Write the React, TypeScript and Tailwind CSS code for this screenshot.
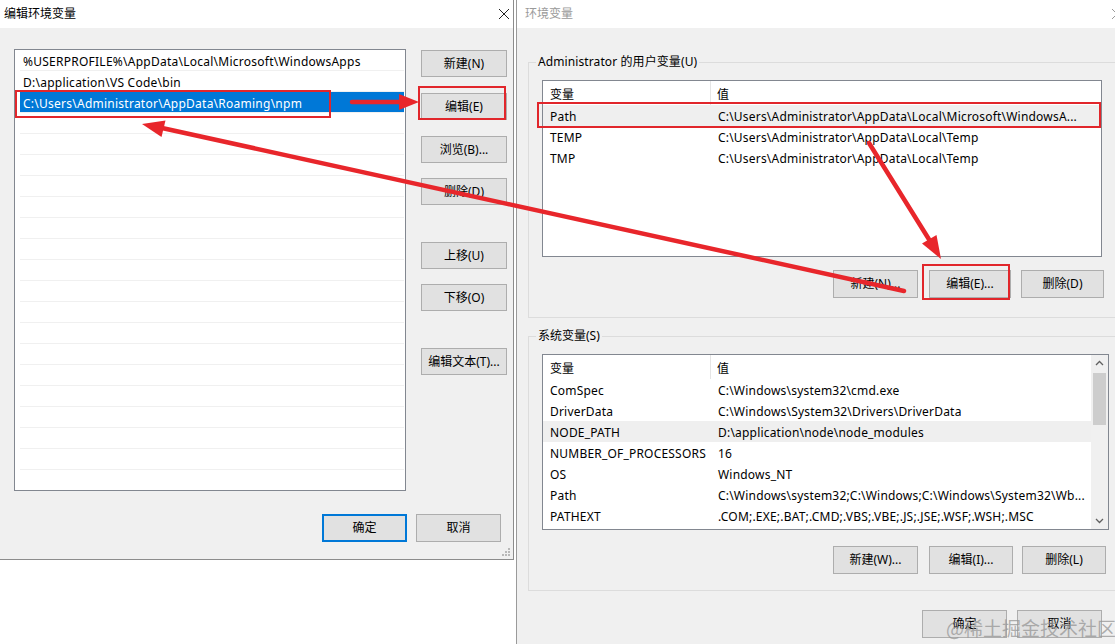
import React from "react";

const FONT = "font-['Noto_Sans','Noto_Sans_CJK_SC',sans-serif]";

function Btn({ children, cls }: { children: React.ReactNode; cls: string }) {
  return (
    <div className={"flex items-center justify-center border border-[#adadad] bg-[#e1e1e1] shrink-0 " + cls}>
      {children}
    </div>
  );
}

function CloseX({ color }: { color: string }) {
  return (
    <svg width="12" height="12" viewBox="0 0 12 12" className="shrink-0">
      <path d="M1 1 L11 11 M11 1 L1 11" stroke={color} strokeWidth="1" fill="none" />
    </svg>
  );
}

const leftRows = [
  "%USERPROFILE%\\AppData\\Local\\Microsoft\\WindowsApps",
  "D:\\application\\VS Code\\bin",
  "C:\\Users\\Administrator\\AppData\\Roaming\\npm",
  ...Array.from({ length: 18 }, () => ""),
];

const userVars: [string, string][] = [
  ["Path", "C:\\Users\\Administrator\\AppData\\Local\\Microsoft\\WindowsA..."],
  ["TEMP", "C:\\Users\\Administrator\\AppData\\Local\\Temp"],
  ["TMP", "C:\\Users\\Administrator\\AppData\\Local\\Temp"],
];

const sysVars: [string, string][] = [
  ["ComSpec", "C:\\Windows\\system32\\cmd.exe"],
  ["DriverData", "C:\\Windows\\System32\\Drivers\\DriverData"],
  ["NODE_PATH", "D:\\application\\node\\node_modules"],
  ["NUMBER_OF_PROCESSORS", "16"],
  ["OS", "Windows_NT"],
  ["Path", "C:\\Windows\\system32;C:\\Windows;C:\\Windows\\System32\\Wb..."],
  ["PATHEXT", ".COM;.EXE;.BAT;.CMD;.VBS;.VBE;.JS;.JSE;.WSF;.WSH;.MSC"],
];

function TableHeader() {
  return (
    <div className="h-[24px] flex items-center bg-white shrink-0">
      <div className="w-[168px] h-full flex items-center pl-[7px] pt-[4px] border-r border-[#e5e5e5] shrink-0">变量</div>
      <div className="pl-[6px] pt-[4px]">值</div>
    </div>
  );
}

function TableRow({ name, value, hi }: { name: string; value: string; hi: boolean }) {
  return (
    <div
      className={
        "h-[21px] flex items-center pt-[3px] shrink-0 whitespace-nowrap tracking-[0.2px] " + (hi ? "bg-[#efefef]" : "")
      }
    >
      <div className="w-[168px] pl-[7px] shrink-0">{name}</div>
      <div className="pl-[7px]">{value}</div>
    </div>
  );
}

export default function App() {
  return (
    <div className={"relative w-[1115px] h-[644px] overflow-hidden bg-white text-[12px] leading-none text-black flex " + FONT}>
      {/* Left dialog column */}
      <div className="w-[516px] shrink-0 flex flex-col bg-white">
        <div className="w-[514px] h-[560px] flex flex-col border-r border-b border-[#8c8c8c]">
          <div className="h-[28px] bg-white flex items-center justify-between pl-[4px] pr-[3px] shrink-0">
            <span>编辑环境变量</span>
            <CloseX color="#222" />
          </div>
          <div className="relative flex-1 bg-[#f0f0f0] flex flex-col pt-[21px] pl-[14px]">
            <div className="flex">
              <div className="w-[392px] h-[442px] border border-[#828790] bg-white overflow-hidden flex flex-col">
                {leftRows.map((r, i) => (
                  <div
                    key={i}
                    className={
                      "ml-[5px] mr-px h-[21px] shrink-0 flex items-center pl-[3px] pt-[3px] border-b border-[#f0f0f0] whitespace-nowrap tracking-[0.25px] " +
                      (i === 2 ? "bg-[#0078d7] text-white" : "")
                    }
                  >
                    {r}
                  </div>
                ))}
              </div>
              <div className="flex flex-col ml-[15px]">
                <Btn cls="w-[86px] h-[27px] mt-px">新建(N)</Btn>
                <Btn cls="w-[86px] h-[27px] mt-[16px]">编辑(E)</Btn>
                <Btn cls="w-[86px] h-[27px] mt-[16px]">浏览(B)...</Btn>
                <Btn cls="w-[86px] h-[27px] mt-[15px]">删除(D)</Btn>
                <Btn cls="w-[86px] h-[27px] mt-[37px]">上移(U)</Btn>
                <Btn cls="w-[86px] h-[27px] mt-[15px]">下移(O)</Btn>
                <Btn cls="w-[86px] h-[27px] mt-[37px]">编辑文本(T)...</Btn>
              </div>
            </div>
            <div className="flex justify-end gap-[9px] mt-[23px] pr-[12px]">
              <div className="w-[85px] h-[28px] flex items-center justify-center border-2 border-[#0078d7] bg-[#e1e1e1]">确定</div>
              <Btn cls="w-[85px] h-[28px]">取消</Btn>
            </div>
            <svg width="10" height="10" viewBox="0 0 10 10" className="absolute right-[2px] bottom-[2px]">
              <rect x="7" y="1" width="2" height="2" fill="#b8b8b8" />
              <rect x="4" y="4" width="2" height="2" fill="#b8b8b8" />
              <rect x="7" y="4" width="2" height="2" fill="#b8b8b8" />
              <rect x="1" y="7" width="2" height="2" fill="#b8b8b8" />
              <rect x="4" y="7" width="2" height="2" fill="#b8b8b8" />
              <rect x="7" y="7" width="2" height="2" fill="#b8b8b8" />
            </svg>
          </div>
        </div>
        <div className="flex-1 bg-white" />
      </div>

      {/* Right dialog */}
      <div className="flex-1 min-w-0 flex flex-col border-l border-[#9a9a9a]">
        <div className="h-[28px] bg-white flex items-center justify-between pl-[8px] shrink-0">
          <span className="text-[#9a9a9a]">环境变量</span>
          <div className="mr-[-8px]">
            <CloseX color="#999" />
          </div>
        </div>
        <div className="flex-1 bg-[#f0f0f0] flex flex-col pl-[11px]">
          <fieldset className="w-[620px] shrink-0 border border-[#dcdcdc] mt-[26px] px-[7px] pb-[19px]">
            <legend className="px-[2px] h-[16px] leading-[16px] tracking-[0.1px]">Administrator 的用户变量(U)</legend>
            <div className="ml-[6px] mt-[10px] w-[560px] h-[177px] border border-[#828790] bg-white flex flex-col overflow-hidden">
              <TableHeader />
              {userVars.map(([n, v], i) => (
                <TableRow key={n} name={n} value={v} hi={i === 0} />
              ))}
            </div>
            <div className="flex ml-[297px] mt-[13px]">
              <Btn cls="w-[85px] h-[28px]">新建(N)...</Btn>
              <Btn cls="w-[82px] h-[28px] ml-[11px]">编辑(E)...</Btn>
              <Btn cls="w-[83px] h-[28px] ml-[10px]">删除(D)</Btn>
            </div>
          </fieldset>

          <fieldset className="w-[620px] shrink-0 border border-[#dcdcdc] mt-[10px] px-[7px] pb-[16px]">
            <legend className="px-[2px] h-[16px] leading-[16px]">系统变量(S)</legend>
            <div className="ml-[6px] mt-[10px] w-[567px] h-[176px] border border-[#828790] bg-white flex overflow-hidden">
              <div className="flex-1 min-w-0 flex flex-col overflow-hidden">
                <TableHeader />
                {sysVars.map(([n, v], i) => (
                  <TableRow key={n} name={n} value={v} hi={i === 2} />
                ))}
              </div>
              <div className="w-[17px] shrink-0 bg-[#f0f0f0] flex flex-col items-center">
                <svg width="17" height="17" viewBox="0 0 17 17" className="shrink-0">
                  <path d="M5 10 L8.5 6.5 L12 10" stroke="#606060" strokeWidth="1.3" fill="none" />
                </svg>
                <div className="w-[13px] h-[52px] bg-[#cdcdcd] mt-px" />
                <div className="flex-1" />
                <svg width="17" height="17" viewBox="0 0 17 17" className="shrink-0">
                  <path d="M5 7 L8.5 10.5 L12 7" stroke="#606060" strokeWidth="1.3" fill="none" />
                </svg>
              </div>
            </div>
            <div className="flex ml-[297px] mt-[16px]">
              <Btn cls="w-[85px] h-[28px]">新建(W)...</Btn>
              <Btn cls="w-[84px] h-[28px] ml-[11px]">编辑(I)...</Btn>
              <Btn cls="w-[84px] h-[28px] ml-[9px]">删除(L)</Btn>
            </div>
          </fieldset>

          <div className="flex ml-[394px] mt-[19px]">
            <Btn cls="w-[85px] h-[28px]">确定</Btn>
            <Btn cls="w-[85px] h-[28px] ml-[10px]">取消</Btn>
          </div>
        </div>
      </div>

      {/* Red annotations */}
      <svg className="absolute inset-0 pointer-events-none" width="1115" height="644" viewBox="0 0 1115 644">
        <g fill="none" stroke="#e1262b" strokeWidth="2">
          <rect x="16" y="91" width="314" height="26" />
          <rect x="419" y="87" width="86" height="32" />
          <rect x="538" y="103" width="562" height="24" />
          <rect x="923" y="265" width="86" height="34" />
        </g>
        <g stroke="#e8262b" strokeWidth="4.5" strokeLinecap="round">
          <line x1="352" y1="102" x2="402" y2="102" />
          <line x1="869" y1="143" x2="930" y2="241" />
          <line x1="904" y1="291" x2="162" y2="128" />
        </g>
        <g fill="#e8262b">
          <polygon points="399,94 419,102 399,110" />
          <polygon points="922,243.5 941,259 936.5,235" />
          <polygon points="142,124 165.5,120.5 161.5,137" />
        </g>
      </svg>

      {/* Watermark */}
      <div className="absolute left-[946px] top-[618px] text-[19px] leading-none whitespace-nowrap text-[rgba(150,150,150,0.75)] font-['Noto_Sans_CJK_SC',sans-serif]">
        @稀土掘金技术社区
      </div>
    </div>
  );
}
